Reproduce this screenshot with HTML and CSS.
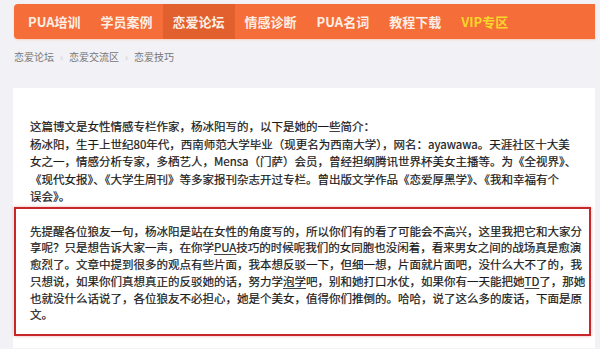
FILE: index.html
```html
<!DOCTYPE html>
<html lang="zh-CN">
<head>
  <meta charset="UTF-8" />
  <title>恋爱技巧 - 恋爱论坛</title>
  <link rel="stylesheet" href="styles.css">
</head>
<body>

  <!-- Top nav -->
  <div class="nav">
    <a class="nav-item">PUA培训</a>
    <a class="nav-item">学员案例</a>
    <a class="nav-item active">恋爱论坛</a>
    <a class="nav-item">情感诊断</a>
    <a class="nav-item">PUA名词</a>
    <a class="nav-item">教程下载</a>
    <a class="nav-item vip">VIP专区</a>
  </div>

  <!-- Breadcrumb -->
  <div class="crumbs">
    <a>恋爱论坛</a><span class="sep">›</span><a>恋爱交流区</a><span class="sep">›</span><a>恋爱技巧</a>
  </div>

  <!-- Post body -->
  <div class="post">
    <p class="intro">
      这篇博文是女性情感专栏作家，杨冰阳写的，以下是她的一些简介：<br>
      杨冰阳，生于上世纪80年代，西南师范大学毕业（现更名为西南大学），网名：ayawawa。天涯社区十大美<br>
      女之一，情感分析专家，多栖艺人，Mensa（门萨）会员，曾经担纲腾讯世界杯美女主播等。为《全视界》、<br>
      《现代女报》、《大学生周刊》等多家报刊杂志开过专栏。曾出版文学作品《恋爱厚黑学》、《我和幸福有个<br>
      误会》。
    </p>

    <div class="note">
      <p>
        先提醒各位狼友一句，杨冰阳是站在女性的角度写的，所以你们有的看了可能会不高兴，这里我把它和大家分<br>
        享呢？只是想告诉大家一声，在你学<u>PUA</u>技巧的时候呢我们的女同胞也没闲着，看来男女之间的战场真是愈演<br>
        愈烈了。文章中提到很多的观点有些片面，我本想反驳一下，但细一想，片面就片面吧，没什么大不了的，我<br>
        只想说，如果你们真想真正的反驳她的话，努力学<u>泡学</u>吧，别和她打口水仗，如果你有一天能把她<u>TD</u>了，那她<br>
        也就没什么话说了，各位狼友不必担心，她是个美女，值得你们推倒的。哈哈，说了这么多的废话，下面是原<br>
        文。
      </p>
    </div>
  </div>

</body>
</html>
```

FILE: styles.css
```css
html, body {
  margin: 0;
  padding: 0;
  background: #f1f1f6;
  font-family: "Noto Sans CJK SC", "Noto Sans", sans-serif;
  overflow: hidden;
}

/* nav */
.nav {
  display: flex;
  height: 35px;
  margin: 4px 5px 0 14px;
  padding-left: 4px;
  background: #f56d38;
  border-radius: 4px 0 0 4px;
  box-shadow: 0 1px 2px #fbd3bf;
}

.nav-item {
  padding: 0 10px;
  line-height: 35px;
  font-size: 13px;
  font-weight: bold;
  color: #fdeee4;
  cursor: pointer;
}

.nav-item.active {
  background: #e2602d;
}

.nav-item.vip {
  color: #f8d52a;
}

/* breadcrumb */
.crumbs {
  padding: 8px 14px 0;
  height: 20px;
  line-height: 20px;
  font-size: 10px;
  color: #777;
}

.crumbs .sep {
  margin: 0 6px;
  color: #ccc;
}

/* post */
.post {
  margin: 21px 5px 0 13px;
  padding: 30px 4px 12px 1px;
  background: #fff;
}

.intro,
.note p {
  margin: 0;
  font-size: 11.5px;
  color: #1a1a1a;
  white-space: nowrap;
  -webkit-text-stroke: 0.2px #1a1a1a;
}

.intro {
  padding: 0 16px;
  line-height: 17.5px;
}

.note {
  margin-top: 1px;
  padding: 14px 14px 11px;
  border: 2px solid #c8272a;
  box-shadow: 0 0 3px rgba(200, 30, 30, 0.35);
}

.note p {
  line-height: 16.8px;
}

.note u {
  text-decoration-color: #444;
  text-underline-offset: 2px;
}
```
